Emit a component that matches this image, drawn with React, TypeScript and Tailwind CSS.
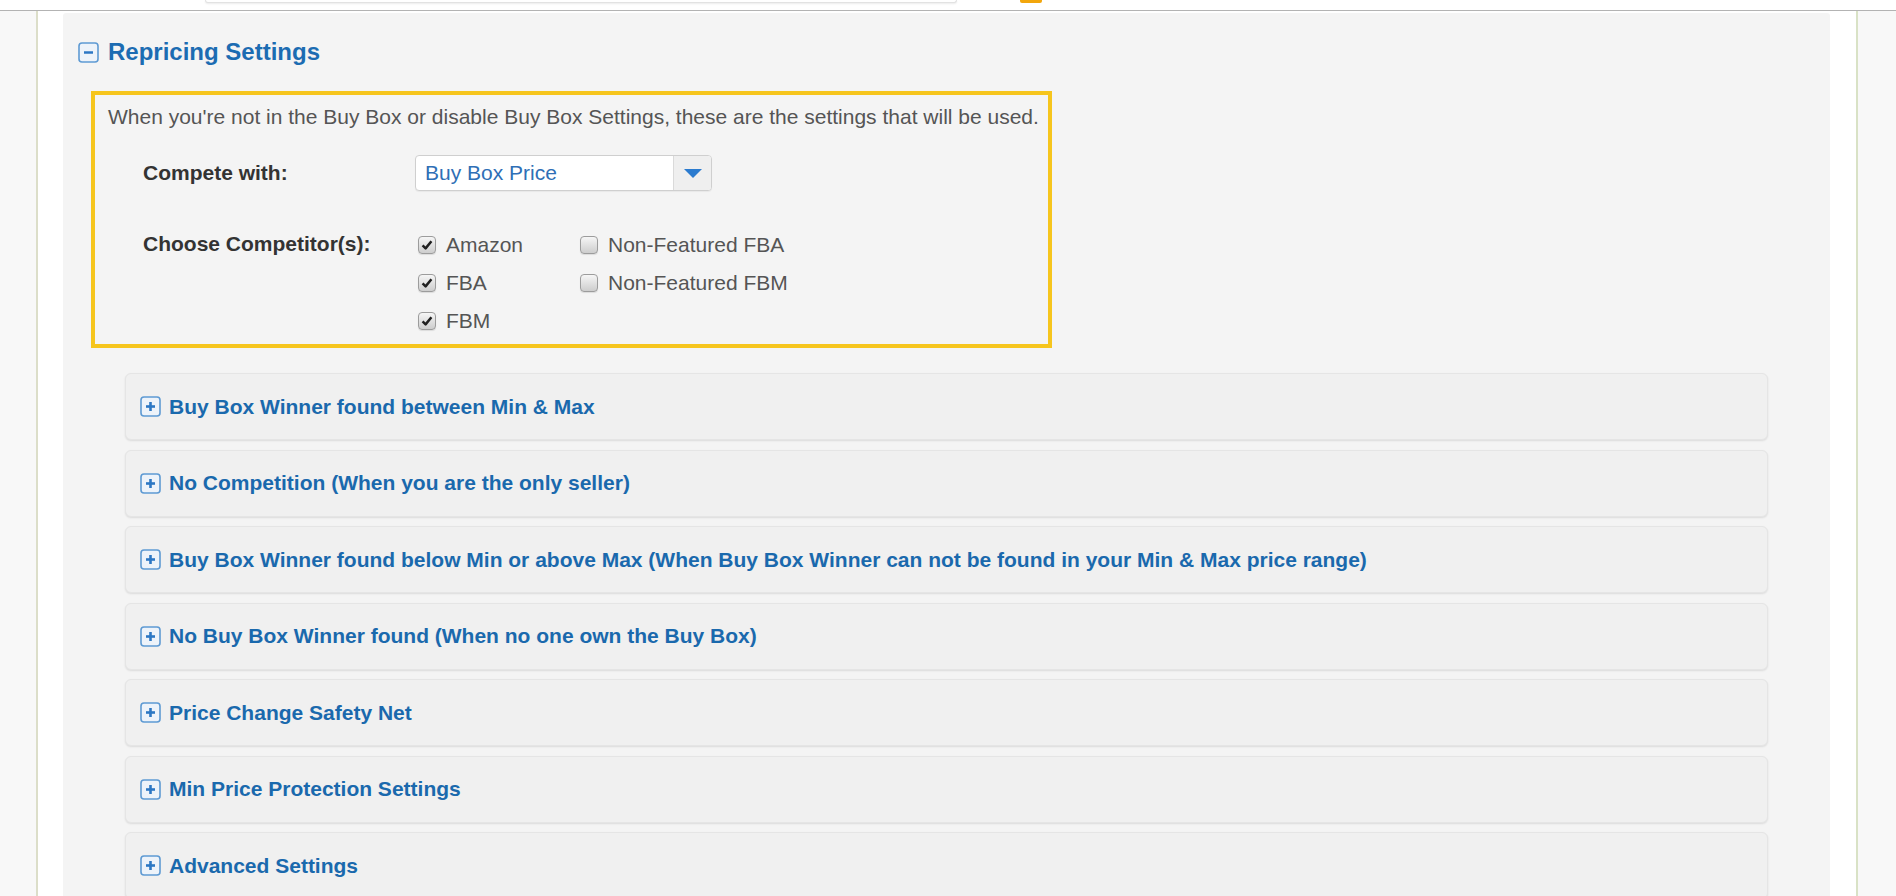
// Repricing settings panel — competitor selection box plus collapsed rule sections.

const SECTIONS = [
  'Buy Box Winner found between Min & Max',
  'No Competition (When you are the only seller)',
  'Buy Box Winner found below Min or above Max (When Buy Box Winner can not be found in your Min & Max price range)',
  'No Buy Box Winner found (When no one own the Buy Box)',
  'Price Change Safety Net',
  'Min Price Protection Settings',
  'Advanced Settings',
]

function ToggleIcon({ open }: { open?: boolean }) {
  return (
    <svg width="21" height="21" viewBox="0 0 21 21" className="shrink-0">
      <rect x="1" y="1" width="19" height="19" rx="3" fill="#edf3fa" stroke="#5e9ad3" strokeWidth="1.6" />
      <path d="M6 10.5h9" stroke="#2c77c4" strokeWidth="2.6" />
      {!open && <path d="M10.5 6v9" stroke="#2c77c4" strokeWidth="2.6" />}
    </svg>
  )
}

function Checkbox({ checked, label }: { checked?: boolean; label: string }) {
  return (
    <label className="flex items-center h-[38px] gap-[10px]">
      <span className="w-[18px] h-[18px] ml-[3px] rounded-[4px] border border-[#9c9c9c] bg-linear-to-b from-[#f6f6f6] to-[#cdcdcd] flex items-center justify-center shadow-[0_1px_1px_rgba(0,0,0,0.1)]">
        {checked && (
          <svg width="12" height="12" viewBox="0 0 12 12">
            <path d="M1.6 6.4 4.6 9.4 10.4 2.2" fill="none" stroke="#1f1f1f" strokeWidth="2.5" strokeLinejoin="round" />
          </svg>
        )}
      </span>
      <span className="text-[21px] leading-[24px] text-[#555]">{label}</span>
    </label>
  )
}

export default function App() {
  return (
    <div className="w-[1896px] h-[896px] overflow-hidden bg-white font-['Liberation_Sans',Arial,sans-serif]">
      {/* tail of the toolbar above, cut by the viewport */}
      <div className="h-[10px] flex items-start">
        <div className="w-[205px]" />
        <div className="w-[752px] h-[3px] bg-white border-b border-x border-[#e2e2e2] rounded-b-[3px] shadow-[0_1px_2px_rgba(0,0,0,0.08)]" />
        <div className="w-[63px]" />
        <div className="w-[22px] h-[3px] bg-[#f2a60c] rounded-b-[2px]" />
      </div>
      <div className="h-px bg-[#b3b3b3]" />

      <div className="flex h-[885px]">
        <div className="w-[36px] bg-[#f8f8f8]" />
        <div className="w-[2px] bg-[#dcdec9]" />
        <div className="w-[25px] bg-white" />

        <div className="flex-1 mt-[2px] bg-[#f4f4f4] rounded-t-[3px] overflow-hidden">
          <div className="pt-[28px] pl-[15px] flex items-center gap-[9px]">
            <ToggleIcon open />
            <h2 className="text-[24px] leading-[22px] font-bold text-[#1c6cb2]">Repricing Settings</h2>
          </div>

          <div className="ml-[28px] mt-[28px] w-[961px] border-[4px] border-[#f6c51d] pb-[4px]">
            <p className="pt-[10px] pl-[13px] text-[21px] leading-[24px] text-[#555]">
              When you're not in the Buy Box or disable Buy Box Settings, these are the settings that will be used.
            </p>

            <div className="mt-[26px] pl-[48px] flex items-center">
              <span className="w-[272px] text-[21px] font-bold text-[#333]">Compete with:</span>
              <div className="w-[297px] h-[36px] flex bg-white border border-[#cfcfcf] rounded-[4px] overflow-hidden shadow-[0_1px_1px_rgba(0,0,0,0.05)]">
                <span className="flex-1 pl-[9px] flex items-center text-[21px] text-[#2f6fb6]">Buy Box Price</span>
                <span className="w-[38px] bg-[#efefef] border-l border-[#dadada] flex items-center justify-center">
                  <svg width="18" height="9" viewBox="0 0 18 9">
                    <path d="M0 0h18L9 9z" fill="#2b7bcf" />
                  </svg>
                </span>
              </div>
            </div>

            <div className="mt-[35px] pl-[48px] flex items-start">
              <span className="w-[272px] mt-[6px] text-[21px] leading-[24px] font-bold text-[#333]">Choose Competitor(s):</span>
              <div className="w-[162px] flex flex-col">
                <Checkbox checked label="Amazon" />
                <Checkbox checked label="FBA" />
                <Checkbox checked label="FBM" />
              </div>
              <div className="flex flex-col">
                <Checkbox label="Non-Featured FBA" />
                <Checkbox label="Non-Featured FBM" />
              </div>
            </div>
          </div>

          <div className="mx-[62px] mt-[25px] flex flex-col gap-[9.5px]">
            {SECTIONS.map((s) => (
              <div
                key={s}
                className="h-[67px] shrink-0 flex items-center gap-[8px] pl-[14px] bg-[#f0f0f0] border border-[#e5e5e5] rounded-[6px] shadow-[0_1px_2px_rgba(0,0,0,0.1)]"
              >
                <ToggleIcon />
                <span className="text-[21px] font-bold text-[#1a69ad]">{s}</span>
              </div>
            ))}
          </div>
        </div>

        <div className="w-[26px] bg-white" />
        <div className="w-[2px] bg-[#d9e2c6]" />
        <div className="w-[38px] bg-[#f8f8f8]" />
      </div>
    </div>
  )
}
